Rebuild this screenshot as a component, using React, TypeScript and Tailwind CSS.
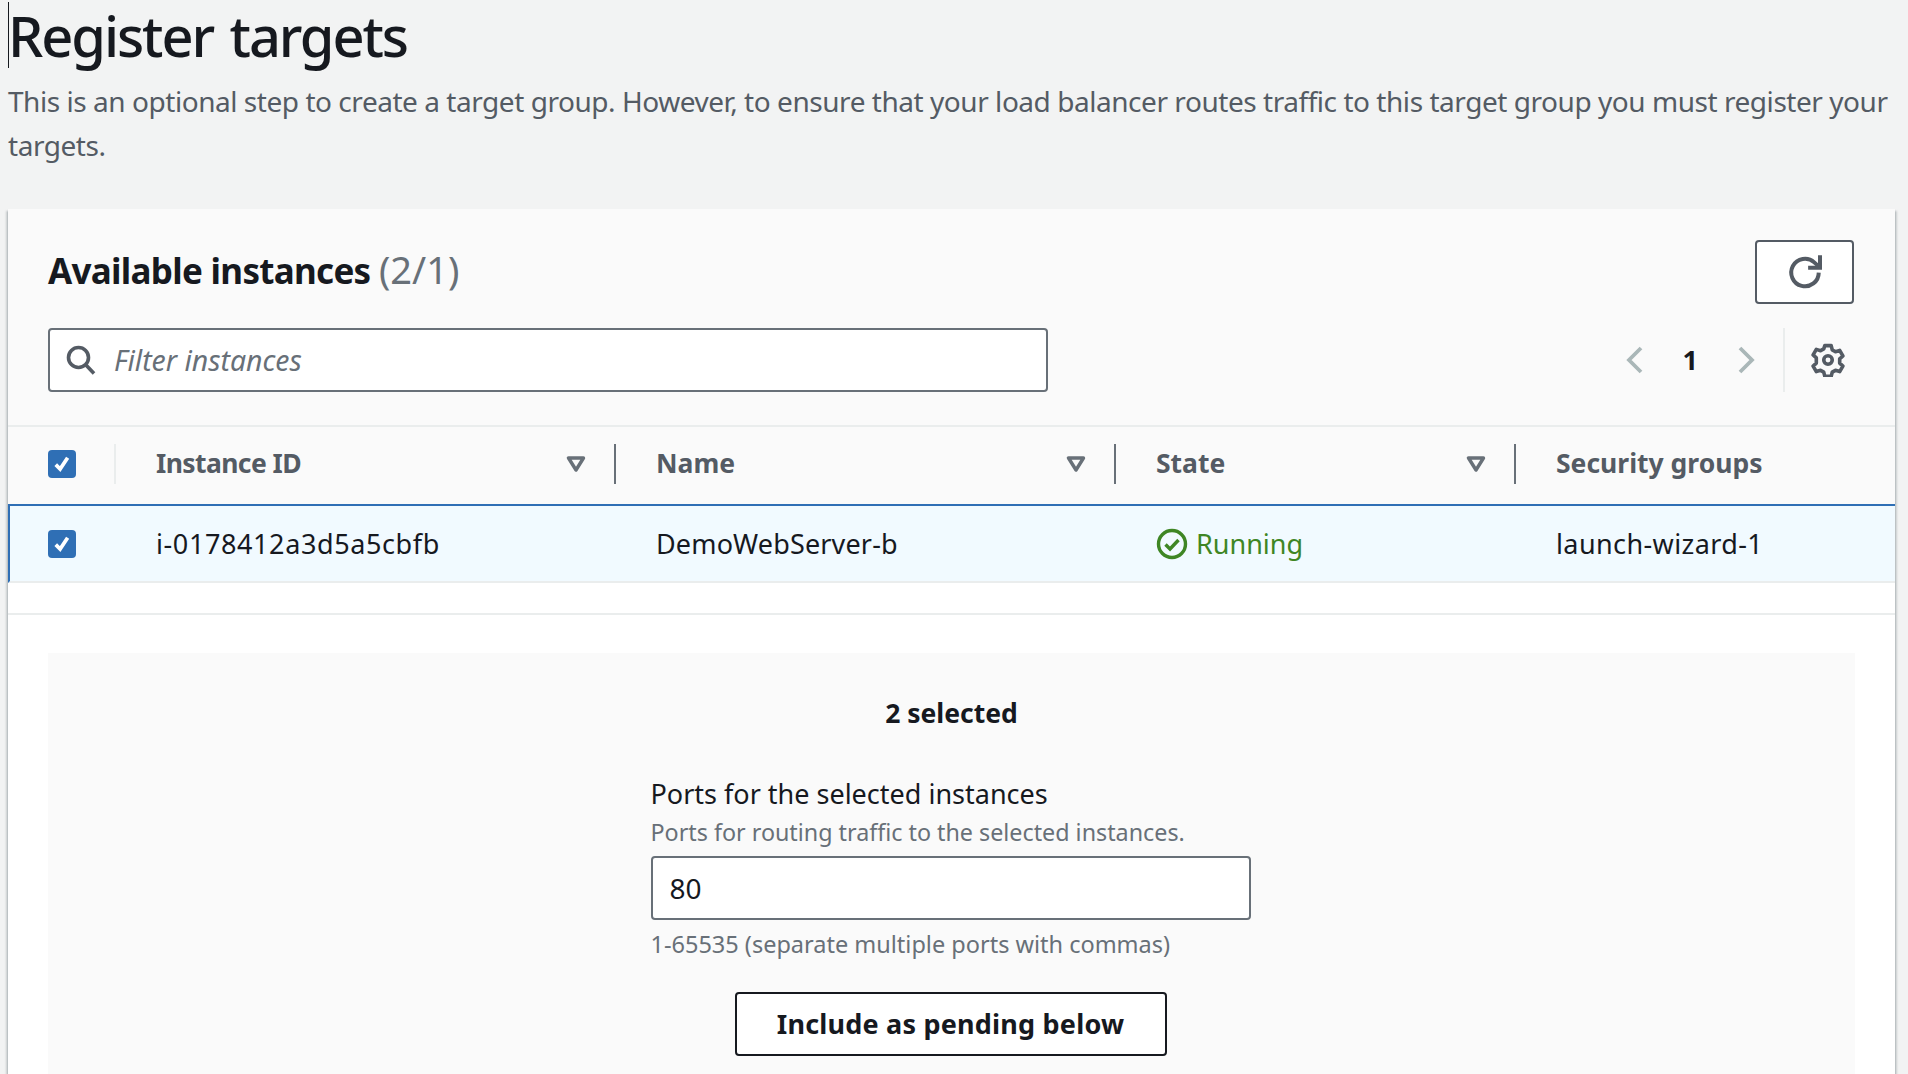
const font = { fontFamily: '"Noto Sans", sans-serif' };

function Checkbox() {
  return (
    <span className="flex h-7 w-7 items-center justify-center rounded-[4px] bg-[#2f6fb5]">
      <svg viewBox="0 0 16 16" className="h-5 w-5" fill="none" stroke="#fff" strokeWidth="3">
        <path d="M3 8.5l3.5 3.5L12.5 3" />
      </svg>
    </span>
  );
}

function FilterCaret() {
  return (
    <svg viewBox="0 0 20 16" className="h-4 w-5" fill="none" stroke="#687078" strokeWidth="3.4">
      <path d="M2.5 2h15L10 14z" strokeLinejoin="round" />
    </svg>
  );
}

function HeaderCell({ label, last, tight }: { label: string; last?: boolean; tight?: boolean }) {
  return (
    <div className="flex h-12 items-center pl-10">
      <span className={tight ? 'text-[26.5px] font-bold tracking-[-0.6px] text-[#545b64]' : 'text-[26.5px] font-bold text-[#545b64]'}>
        {label}
      </span>
      {!last && (
        <div className="ml-auto flex h-full items-center gap-[28px]">
          <FilterCaret />
          <span className="h-10 w-0.5 bg-[#687078]" />
        </div>
      )}
    </div>
  );
}

export default function App() {
  return (
    <div className="relative h-screen w-full overflow-hidden bg-[#f2f3f3] pl-2 text-[#16191f]" style={font}>
      <span className="absolute left-2 top-0.5 h-[66px] w-px bg-[#16191f]" />
      <h1 className="h-[72px] pb-0.5 text-[56px] font-medium leading-[70px] tracking-[-2.1px] [word-spacing:4px]">Register targets</h1>
      <p className="mt-[7px] w-[1890px] text-[28px] leading-[44px] tracking-[-0.455px] text-[#545b64]">
        This is an optional step to create a target group. However, to ensure that your load balancer routes traffic to
        this target group you must register your targets.
      </p>

      <div className="mt-[42px] h-[900px] w-[1887px] bg-white shadow-[0_2px_2px_0_rgba(0,28,36,0.3),2px_2px_2px_0_rgba(0,28,36,0.15),-2px_2px_2px_0_rgba(0,28,36,0.15)]">
        <div className="bg-[#fafafa]">
          <div className="flex items-start justify-between pl-10 pr-[41px] pt-[31px]">
            <h2 className="mt-1 text-[35px] font-bold leading-[50px] tracking-[-0.7px]">
              Available instances{' '}
              <span className="text-[38px] font-normal tracking-normal text-[#687078]">(2/1)</span>
            </h2>
            <button className="flex h-16 w-[99px] items-center justify-center rounded-[4px] border-2 border-[#545b64] bg-white">
              <svg viewBox="0 0 32 32" className="h-10 w-10" fill="none" stroke="#545b64" strokeWidth="3.2">
                <path d="M27 16.5a11 11 0 1 1-3.6-8.2L27 11.5" />
                <path d="M28 2.5v10h-9.5" />
              </svg>
            </button>
          </div>

          <div className="mt-6 flex h-16 items-center pl-10 pr-[50px]">
            <div className="flex h-16 w-[1000px] items-center rounded-[4px] border-2 border-[#687078] bg-white pl-[15px]">
              <svg viewBox="0 0 32 32" className="h-8 w-8" fill="none" stroke="#545b64" strokeWidth="3.6">
                <circle cx="13.5" cy="13.5" r="10" />
                <path d="M20.5 20.5l8.5 9" />
              </svg>
              <span className="ml-[17px] text-[28.4px] italic text-[#687078]">Filter instances</span>
            </div>
            <div className="ml-auto flex h-full items-center">
              <svg viewBox="0 0 20 32" className="h-8 w-5" fill="none" stroke="#aab7b8" strokeWidth="3.8">
                <path d="M16 4L4 16l12 12" />
              </svg>
              <span className="ml-[38px] text-[27px] font-bold">1</span>
              <svg viewBox="0 0 20 32" className="ml-[38px] h-8 w-5" fill="none" stroke="#aab7b8" strokeWidth="3.8">
                <path d="M4 4l12 12L4 28" />
              </svg>
              <span className="ml-[27px] h-full w-0.5 bg-[#eaeded]" />
              <svg viewBox="0 0 32 32" className="ml-[26px] h-[34px] w-[34px]" fill="none" stroke="#545b64" strokeWidth="3.4">
                <circle cx="16" cy="16" r="4" />
                <path
                  d="M13 2.5h6l1 4 3 1.7 4-1.2 3 5.2-3 2.8v3.9l3 2.8-3 5.2-4-1.2-3 1.7-1 4h-6l-1-4-3-1.7-4 1.2-3-5.2 3-2.8V14l-3-2.8L5 6l4 1.2 3-1.7z"
                  strokeLinejoin="round"
                />
              </svg>
            </div>
          </div>

          <div className="mt-[33px] grid h-[79px] grid-cols-[108px_500px_500px_400px_1fr] items-center border-t-2 border-[#eaeded] pb-[3px]">
            <div className="flex h-12 items-center justify-between pl-10">
              <Checkbox />
              <span className="h-10 w-0.5 bg-[#eaeded]" />
            </div>
            <HeaderCell label="Instance ID" tight />
            <HeaderCell label="Name" />
            <HeaderCell label="State" />
            <HeaderCell label="Security groups" last />
          </div>
        </div>

        <div className="grid h-[79px] grid-cols-[106px_500px_500px_400px_1fr] items-center border-y-2 border-b-[#eaeded] border-l-2 border-l-[#2f6fb5] border-t-[#2f6fb5] bg-[#f1faff] text-[27px]">
          <div className="pl-[38px]">
            <Checkbox />
          </div>
          <div className="pl-10 pt-0.5 tracking-[0.6px]">i-0178412a3d5a5cbfb</div>
          <div className="pl-10 pt-0.5 tracking-[0.15px]">DemoWebServer-b</div>
          <div className="flex items-center pl-10 text-[#3f8624]">
            <svg viewBox="0 0 32 32" className="mr-2 h-8 w-8" fill="none" stroke="#3f8624" strokeWidth="3.4">
              <circle cx="16" cy="16" r="13.5" />
              <path d="M9.5 16.5l4.5 4.5 8.5-9" />
            </svg>
            <span className="pt-0.5">Running</span>
          </div>
          <div className="pl-10 pt-0.5 tracking-[0.4px]">launch-wizard-1</div>
        </div>

        <div className="mt-[30px] border-t-2 border-[#eaeded] pl-10 pr-10 pt-[38px]">
          <div className="h-[500px] w-[1807px] bg-[#fafafa] pt-[42px]">
            <div className="text-center text-[26.5px] font-bold leading-9">2 selected</div>
            <div className="mx-auto mt-[45px] w-[600px] -translate-x-px text-[27px]">
              <div className="leading-9">Ports for the selected instances</div>
              <div className="mt-0.5 text-[23.3px] leading-9 text-[#687078]">Ports for routing traffic to the selected instances.</div>
              <div className="mt-1.5 flex h-16 items-center rounded-[4px] border-2 border-[#687078] bg-white pl-[17px] text-[28px]">80</div>
              <div className="mt-1.5 text-[23.5px] leading-9 text-[#687078]">1-65535 (separate multiple ports with commas)</div>
            </div>
            <button className="mx-auto mt-[30px] block h-16 w-[432px] -translate-x-px rounded-[4px] border-2 border-[#16191f] bg-white text-[27px] font-bold tracking-[0.2px]">
              Include as pending below
            </button>
          </div>
        </div>
      </div>
    </div>
  );
}
